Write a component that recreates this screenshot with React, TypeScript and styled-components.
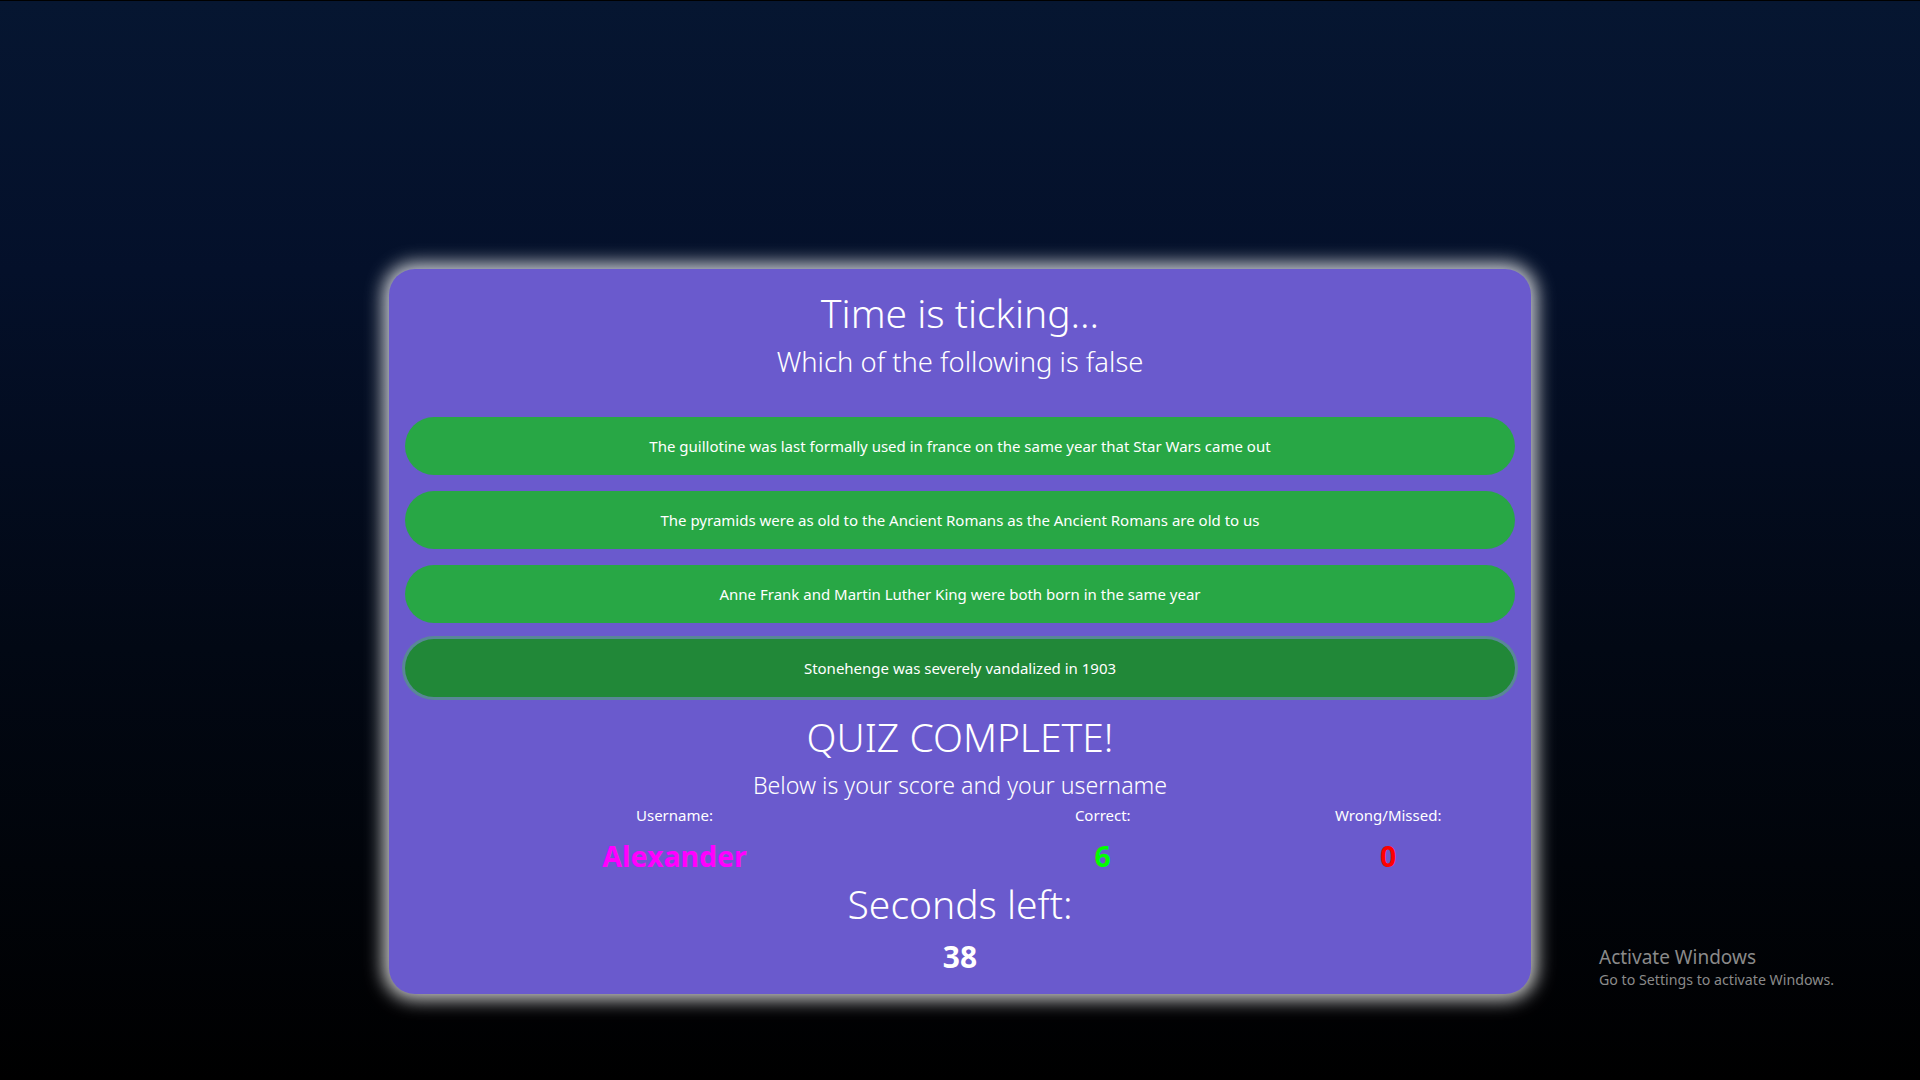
import React from "react";
import styled, { createGlobalStyle } from "styled-components";

const GlobalStyle = createGlobalStyle`
  html, body { margin: 0; padding: 0; }
  body {
    font-family: "Noto Sans", "Open Sans", sans-serif;
    background: #000;
  }
`;

const Page = styled.div`
  position: relative;
  width: 1920px;
  height: 1080px;
  box-sizing: border-box;
  border-top: 1px solid #000;
  background: linear-gradient(to bottom, #061631 0%, #04102a 25%, #020814 60%, #000000 100%);
  display: flex;
  justify-content: center;
  padding-top: 268px;
  overflow: hidden;
`;

const Card = styled.div`
  width: 1142px;
  height: 725px;
  box-sizing: border-box;
  background: #6a5acd;
  border-radius: 26px;
  box-shadow: 0 0 18px 6px rgba(255, 255, 255, 0.78);
  color: #fff;
  padding: 20px 16px 0;
  display: flex;
  flex-direction: column;
  align-items: stretch;
  text-align: center;
`;

const Title = styled.h1`
  margin: 0;
  font-size: 39px;
  font-weight: 300;
  line-height: 48px;
`;

const Subtitle = styled.h3`
  margin: 8px 0 0;
  font-size: 27.4px;
  font-weight: 300;
  line-height: 34px;
`;

const Answers = styled.div`
  margin-top: 38px;
  display: flex;
  flex-direction: column;
  gap: 16px;
`;

const Answer = styled.button<{ $active?: boolean }>`
  height: 58px;
  border: none;
  border-radius: 29px;
  background: ${(p) => (p.$active ? "#218838" : "#28a745")};
  box-shadow: ${(p) => (p.$active ? "0 0 0 3px rgba(72, 180, 97, 0.5)" : "none")};
  color: #fff;
  font-family: "Noto Sans", "Open Sans", sans-serif;
  font-size: 15px;
  cursor: pointer;
`;

const Heading = styled.h1`
  margin: 16px 0 0;
  font-size: 39px;
  font-weight: 300;
  line-height: 48px;
`;

const Sub = styled.h3`
  margin: 7px 0 0;
  font-size: 23.2px;
  font-weight: 300;
  line-height: 34px;
`;

const Scores = styled.div`
  margin: 1px -16px 0;
  display: grid;
  grid-template-columns: 2fr 1fr 1fr;
`;

const ScoreCol = styled.div`
  display: flex;
  flex-direction: column;
  align-items: center;
`;

const Label = styled.div`
  font-size: 15px;
  line-height: 24px;
`;

const Value = styled.div<{ $color: string }>`
  margin-top: 12px;
  font-size: 28.5px;
  font-weight: 700;
  line-height: 34px;
  color: ${(p) => p.$color};
`;

const Timer = styled.div`
  margin-top: 7px;
  font-size: 39px;
  font-weight: 300;
  line-height: 48px;
`;

const Count = styled.div`
  margin-top: 12px;
  font-size: 30px;
  font-weight: 700;
  line-height: 34px;
`;

const Watermark = styled.div`
  position: absolute;
  left: 1599px;
  top: 943px;
  color: #8a8a8a;
  font-family: "Noto Sans", "Open Sans", sans-serif;
`;

const WatermarkTitle = styled.div`
  font-size: 19px;
  line-height: 26px;
`;

const WatermarkText = styled.div`
  font-size: 14.2px;
  line-height: 20px;
`;

const answers = [
  "The guillotine was last formally used in france on the same year that Star Wars came out",
  "The pyramids were as old to the Ancient Romans as the Ancient Romans are old to us",
  "Anne Frank and Martin Luther King were both born in the same year",
  "Stonehenge was severely vandalized in 1903",
];

export default function App() {
  return (
    <>
      <GlobalStyle />
      <Page>
        <Card>
          <Title>Time is ticking...</Title>
          <Subtitle>Which of the following is false</Subtitle>
          <Answers>
            {answers.map((a, i) => (
              <Answer key={i} $active={i === 3}>
                {a}
              </Answer>
            ))}
          </Answers>
          <Heading>QUIZ COMPLETE!</Heading>
          <Sub>Below is your score and your username</Sub>
          <Scores>
            <ScoreCol>
              <Label>Username:</Label>
              <Value $color="#ff00ff">Alexander</Value>
            </ScoreCol>
            <ScoreCol>
              <Label>Correct:</Label>
              <Value $color="#00ff00">6</Value>
            </ScoreCol>
            <ScoreCol>
              <Label>Wrong/Missed:</Label>
              <Value $color="#ff0000">0</Value>
            </ScoreCol>
          </Scores>
          <Timer>Seconds left:</Timer>
          <Count>38</Count>
        </Card>
        <Watermark>
          <WatermarkTitle>Activate Windows</WatermarkTitle>
          <WatermarkText>Go to Settings to activate Windows.</WatermarkText>
        </Watermark>
      </Page>
    </>
  );
}
